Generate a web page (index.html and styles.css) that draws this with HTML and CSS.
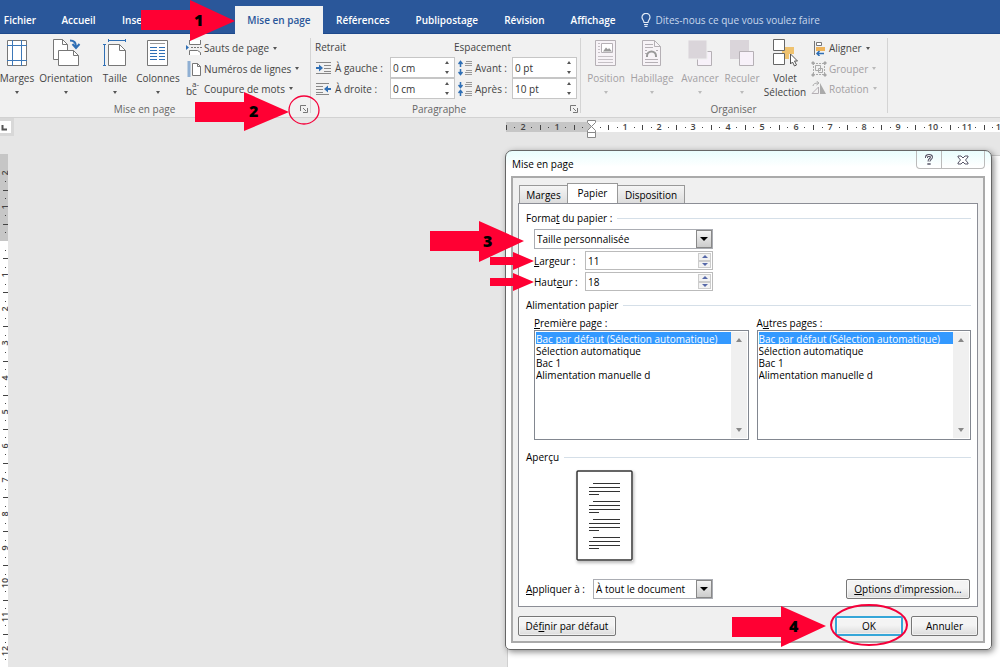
FILE: index.html
```html
<!DOCTYPE html>
<html lang="fr">
<head>
<meta charset="utf-8">
<title>Mise en page</title>
<link rel="stylesheet" href="styles.css">
</head>
<body>
<nav class="tabs">
  <a href="#" class="tab tab-file">Fichier</a>
  <a href="#" class="tab tab-home">Accueil</a>
  <a href="#" class="tab tab-insert">Insertion</a>
  <a href="#" class="tab tab-active">Mise en page</a>
  <a href="#" class="tab">Références</a>
  <a href="#" class="tab">Publipostage</a>
  <a href="#" class="tab">Révision</a>
  <a href="#" class="tab">Affichage</a>
  <a href="#" class="tell">
    <svg width="10" height="14" viewBox="0 0 10 14" fill="none" stroke="#e4ecf7" stroke-width="1.2"><path d="M3 9.500C3 7.500 1 6.500 1 4.300a4 4 0 0 1 8 0C9 6.500 7 7.500 7 9.500zM3 11.500h4M3.500 13.300h3"/></svg>
    Dites-nous ce que vous voulez faire
  </a>
</nav>

<div class="ribbon">
  <section class="group group-page">
    <div class="group-body">
      <button class="big w-marges"><svg width="24" height="28" viewBox="0 0 24 28"><path d="M2.500 1.500h19v25h-19z" fill="#fff" stroke="#777"/><path d="M7.500 1v26M16.500 1v26M2 6.500h20M2 21.500h20" stroke="#3d78b8" fill="none"/></svg>Marges<i class="caret"></i></button>
      <button class="big w-orient"><svg width="30" height="28" viewBox="0 0 30 28"><path d="M2.500.5h9l5 5v15h-14z" fill="#fff" stroke="#777"/><path d="M11.500.5v5h5" fill="none" stroke="#777"/><path d="M7.500 11.500h15l5 5v10h-20z" fill="#fff" stroke="#777"/><path d="M22.500 11.500v5h5" fill="none" stroke="#777"/><path d="M19 1.500c4 0 6 2 6 6M21.500 5l3.500 4 3.500-4" fill="none" stroke="#2f6fb5" stroke-width="2"/></svg>Orientation<i class="caret"></i></button>
      <button class="big w-taille"><svg width="24" height="28" viewBox="0 0 24 28"><path d="M5.500 5.500h11l6 6v15h-17z" fill="#fff" stroke="#777"/><path d="M16.500 5.500v6h6" fill="none" stroke="#777"/><path d="M5 1.500h18M5.500 0v3M22.500 0v3M1.500 5v21M0 5.500h3M0 26.500h3" stroke="#2f6fb5" fill="none"/></svg>Taille<i class="caret"></i></button>
      <button class="big w-col"><svg width="24" height="28" viewBox="0 0 24 28"><path d="M1.500 1.500h20v25h-20z" fill="#fff" stroke="#777"/><path d="M4 4.500h15" stroke="#999"/><path d="M4 8.500h7M13 8.500h6M4 11.500h7M13 11.500h6M4 14.500h7M13 14.500h6M4 17.500h7M13 17.500h6M4 20.500h7M13 20.500h6" stroke="#2f6fb5"/></svg>Colonnes<i class="caret"></i></button>
      <div class="rows">
        <button class="row"><svg width="16" height="16" viewBox="0 0 16 16" fill="none"><path d="M3.500 0v4.500h11V0M3.500 15v-4.500h8l3 2V15" fill="#fff" stroke="#777"/><path d="M5 7.500h11" stroke="#777" stroke-dasharray="2 1"/><path d="M0 5l3 2.500L0 10z" fill="#2f6fb5"/></svg>Sauts de page<i class="caret"></i></button>
        <button class="row"><svg width="16" height="16" viewBox="0 0 16 16" fill="none"><path d="M6.500 2.500h5l3 3v9h-8z" fill="#fff" stroke="#777"/><path d="M11.500 2.500v3h3" stroke="#777"/><path d="M3 .5v15" stroke="#2f6fb5" stroke-width="3" stroke-dasharray="1 1"/></svg>Numéros de lignes<i class="caret"></i></button>
        <button class="row"><svg width="16" height="20" viewBox="0 0 16 20"><text x="0" y="16" class="glyph">bc</text><text x="6" y="8" class="glyph glyph-sm">a-</text></svg>Coupure de mots<i class="caret"></i></button>
      </div>
    </div>
    <div class="group-foot"><span>Mise en page</span><button class="launch" aria-label="Mise en page"><svg width="8" height="8" viewBox="0 0 8 8" fill="none" stroke="#777"><path d="M.5 6V.5H6M3 3l3 3M7.500 3v4.500H3"/></svg></button></div>
  </section>

  <section class="group group-para">
    <div class="group-body para">
      <div class="para-col">
        <span class="para-head">Retrait</span>
        <div class="field"><svg width="16" height="14" viewBox="0 0 16 14"><path d="M1 1.500h15M9 4.500h7M9 7.500h7M1 12.500h15M9 10.500h7" stroke="#888"/><path d="M1 6h3V3.500L8 7l-4 3.500V8H1z" fill="#2f6fb5"/></svg><label for="g">À gauche :</label><span class="spin"><input id="g" value="0 cm"><span class="ud"><button aria-label="Plus"></button><button aria-label="Moins"></button></span></span></div>
        <div class="field"><svg width="16" height="14" viewBox="0 0 16 14"><path d="M1 1.500h13M1 4.500h7M1 7.500h7M1 12.500h13M1 10.500h7" stroke="#888"/><path d="M16 6h-3V3.500L9 7l4 3.500V8h3z" fill="#2f6fb5"/></svg><label for="d">À droite :</label><span class="spin"><input id="d" value="0 cm"><span class="ud"><button aria-label="Plus"></button><button aria-label="Moins"></button></span></span></div>
      </div>
      <div class="para-col">
        <span class="para-head">Espacement</span>
        <div class="field field-gap"><svg width="14" height="16" viewBox="0 0 14 16"><path d="M2.500 7V2M.5 4l2-2.500 2 2.500M2.500 9v5M.5 12l2 2.500 2-2.500" fill="none" stroke="#2f6fb5" stroke-width="1.500"/><path d="M8 1.500h6M7 3.500h7M7 5.500h7M8 10.500h6M7 12.500h7M7 14.500h7" stroke="#999"/></svg><label for="av">Avant :</label><span class="spin"><input id="av" value="0 pt"><span class="ud"><button aria-label="Plus"></button><button aria-label="Moins"></button></span></span></div>
        <div class="field field-gap"><svg width="14" height="16" viewBox="0 0 14 16"><path d="M2.500 1v5M.5 4l2 2.500 2-2.500M2.500 15v-5M.5 12l2-2.500 2 2.500" fill="none" stroke="#2f6fb5" stroke-width="1.500"/><path d="M8 1.500h6M7 3.500h7M7 5.500h7M8 10.500h6M7 12.500h7M7 14.500h7" stroke="#999"/></svg><label for="ap">Après :</label><span class="spin"><input id="ap" value="10 pt"><span class="ud"><button aria-label="Plus"></button><button aria-label="Moins"></button></span></span></div>
      </div>
    </div>
    <div class="group-foot"><span>Paragraphe</span><button class="launch" aria-label="Paragraphe"><svg width="8" height="8" viewBox="0 0 8 8" fill="none" stroke="#777"><path d="M.5 6V.5H6M3 3l3 3M7.500 3v4.500H3"/></svg></button></div>
  </section>

  <section class="group group-org">
    <div class="group-body">
      <button class="big off w-pos"><svg width="22" height="28" viewBox="0 0 22 28"><path d="M.5 1.500h20v25H.5z" fill="#f7f3f7" stroke="#b5b0b5"/><path d="M3 4.500h2M3 7.500h2M3 10.500h2M3 13.500h2M3 17.500h15M3 20.500h15M3 23.500h15" stroke="#c5c0c5"/><path d="M6.500 4.500h11v9h-11z" fill="#fff" stroke="#b5b0b5"/><path d="M8 12.500l3-4 2 2 1-1.500 3 3.500z" fill="#999"/></svg>Position<i class="caret"></i></button>
      <button class="big off w-hab"><svg width="22" height="28" viewBox="0 0 22 28"><path d="M1.500 1.500h12l6 6v19h-18z" fill="#f7f3f7" stroke="#b5b0b5"/><path d="M13.500 1.500v6h6M4 5.500h8M4 8.500h8M4 11.500h2M15 11.500h2M4 14.500h2M4 20.500h13M4 23.500h13" fill="none" stroke="#b5b0b5"/><path d="M6 18v-1a4.500 4.500 0 0 1 9 0v1" fill="none" stroke="#999" stroke-width="2"/></svg>Habillage<i class="caret"></i></button>
      <button class="big off w-av"><svg width="26" height="28" viewBox="0 0 26 28"><path d="M10.500 12.500h14v14h-14z" fill="#f7f1f9" stroke="#b5b0b5"/><path d="M1 1h19v19H1z" fill="#dad5da" stroke="#f0f0f0"/></svg>Avancer<i class="caret"></i></button>
      <button class="big off w-rec"><svg width="26" height="28" viewBox="0 0 26 28"><path d="M1 1h19v19H1z" fill="#dad5da"/><path d="M10.500 12.500h14v14h-14z" fill="#f7f1f9" stroke="#b5b0b5"/></svg>Reculer<i class="caret"></i></button>
      <button class="big w-volet"><svg width="26" height="28" viewBox="0 0 26 28"><path d="M10 8h12v7h-5v5h-5v-5h-2z" fill="#efc26f"/><path d="M1.500.5h11v11h-11zM1.500 14.500h11v11h-11z" fill="#fff" stroke="#666"/><path d="M18.500 15v10l2-2 2 4 2-1-2-4h3z" fill="#fff" stroke="#555"/></svg>Volet<br>Sélection</button>
      <div class="rows">
        <button class="row"><svg width="16" height="16" viewBox="0 0 16 16"><path d="M3.500 1v14" stroke="#777"/><path d="M5.500 2.500h5v3h-5z" fill="#fff" stroke="#777"/><path d="M5 7h9v4H5z" fill="#efb45a"/><path d="M6 13.500h7M8.500 11L6 13.500 8.500 16" fill="none" stroke="#2f6fb5" stroke-width="1.500"/></svg>Aligner<i class="caret"></i></button>
        <button class="row off"><svg width="16" height="16" viewBox="0 0 16 16" fill="none" stroke="#aaa"><path d="M2 2.500h12M2 13.500h12M2.500 2v12M13.500 2v12" stroke-dasharray="2 1"/><path d="M4.500 4.500h5v5h-5zM7.500 7.500h4v4h-4z"/><path d="M1 1h2v2H1zM13 1h2v2h-2zM1 13h2v2H1zM13 13h2v2h-2z" fill="#999"/></svg>Grouper<i class="caret"></i></button>
        <button class="row off"><svg width="16" height="16" viewBox="0 0 16 16"><path d="M9 2l6 11H9z" fill="#aaa"/><path d="M7.500 6v6.500H1z" fill="none" stroke="#b5b0b5"/><path d="M2 5c0-2 2-3 5-3M5.500 0L8 2 5.500 4" fill="none" stroke="#aaa"/></svg>Rotation<i class="caret"></i></button>
      </div>
    </div>
    <div class="group-foot"><span>Organiser</span></div>
  </section>
</div>

<main class="work">
  <div class="ruler-row">
    <span class="tabstop"><svg width="10" height="12" viewBox="0 0 10 12"><path d="M2.500 4v4.500H7" fill="none" stroke="#555" stroke-width="2"/></svg></span>
    <svg class="ruler-h" height="20"><rect x="0" y="4" width="86" height="10" fill="#c6c6c6"/><rect x="86" y="4" width="100%" height="10" fill="#fff"/><g id="ticks-h"></g><path d="M81.500 2.500h8v2l-4 4 4 4v2h-8v-2l4-4-4-4zM81.500 14.500h8v5h-8z" fill="#fff" stroke="#888"/></svg>
  </div>
  <div class="canvas">
    <svg class="ruler-v" width="8"><rect width="8" height="87" fill="#c6c6c6"/><rect y="87" width="8" height="100%" fill="#fff"/><g id="ticks-v"></g></svg>
    <div class="sheet"></div>
  </div>
</main>

<form class="dialog">
  <header class="title"><span>Mise en page</span>
    <span class="winbtns"><button type="button" aria-label="Aide"><svg width="10" height="12" viewBox="0 0 10 12" fill="none"><path d="M2.500 4V3c0-2 5-2 5 0S5 5 5 7.500M5 9v2" stroke="#556" stroke-width="3"/><path d="M2.500 4V3c0-2 5-2 5 0S5 5 5 7.500M5 9.500v1" stroke="#fff"/></svg></button><button type="button" class="close" aria-label="Fermer"><svg width="12" height="10" viewBox="0 0 12 10"><path d="M1 1h3l2 2 2-2h3v1L8.500 5 11 8v1H8L6 7 4 9H1V8l2.500-3L1 2z" fill="#fff" stroke="#556"/></svg></button></span>
  </header>
  <div class="frame">
    <div class="dtabs"><button type="button" class="dtab d1">Marges</button><button type="button" class="dtab d2">Papier</button><button type="button" class="dtab d3">Disposition</button></div>
    <div class="panel">
      <div class="legend"><span>Forma<u>t</u> du papier :</span></div>
      <div class="paper">
        <span class="combo combo-size"><select aria-label="Format du papier"><option>Taille personnalisée</option></select><i class="drop"></i></span>
        <label for="lw"><u>L</u>argeur :</label><span class="dspin"><input id="lw" value="11"><span class="dud"><button type="button" aria-label="Plus"></button><button type="button" aria-label="Moins"></button></span></span>
        <label for="lh">Haut<u>e</u>ur :</label><span class="dspin"><input id="lh" value="18"><span class="dud"><button type="button" aria-label="Plus"></button><button type="button" aria-label="Moins"></button></span></span>
      </div>
      <div class="legend"><span>Alimentation papier</span></div>
      <div class="lists">
        <div class="list"><label for="p1"><u>P</u>remière page :</label><div class="box"><select id="p1" size="4"><option selected>Bac par défaut (Sélection automatique)</option><option>Sélection automatique</option><option>Bac 1</option><option>Alimentation manuelle d</option></select><span class="rail"><i></i><i></i></span></div></div>
        <div class="list"><label for="p2">A<u>u</u>tres pages :</label><div class="box"><select id="p2" size="4"><option selected>Bac par défaut (Sélection automatique)</option><option>Sélection automatique</option><option>Bac 1</option><option>Alimentation manuelle d</option></select><span class="rail"><i></i><i></i></span></div></div>
      </div>
      <div class="legend"><span>Aperçu</span></div>
      <svg class="preview" width="57" height="91" viewBox="0 0 57 91"><rect x="1" y="1" width="55" height="89" rx="1" fill="#fff" stroke="#333" stroke-width="1.500"/><path d="M17 13.500h27M13 17.500h31M13 21.500h31M13 24.500h10M17 31.500h27M13 35.500h31M13 39.500h31M13 42.500h10M17 49.500h27M13 53.500h31M13 57.500h31M13 60.500h10M17 67.500h27M13 71.500h31M13 75.500h31M13 78.500h10" stroke="#333" stroke-width="1.200"/></svg>
      <div class="apply"><label for="apl"><u>A</u>ppliquer à :</label><span class="combo combo-apply"><select id="apl"><option>À tout le document</option></select><i class="drop"></i></span><button type="button" class="btn btn-opt"><u>O</u>ptions d'impression...</button></div>
    </div>
    <div class="actions"><button type="button" class="btn btn-def">Dé<u>f</u>inir par défaut</button><button type="button" class="btn btn-ok">OK</button><button type="button" class="btn btn-cancel">Annuler</button></div>
  </div>
</form>

<svg class="mark m1" width="94" height="42" viewBox="0 0 94 42"><path d="M0 10h49V0l45 21-45 20V30H0z"/><text x="53" y="26">1</text></svg>
<svg class="mark m2" width="94" height="42" viewBox="0 0 94 42"><path d="M0 10h49V0l45 20-45 19V30H0z"/><text x="54" y="25">2</text></svg>
<svg class="mark m3" width="94" height="42" viewBox="0 0 94 42"><path d="M0 10h49V0l45 20-45 21V30H0z"/><text x="53" y="26">3</text></svg>
<svg class="mark m4" width="94" height="42" viewBox="0 0 94 42"><path d="M0 11h49V0l45 20-45 21V31H0z"/><text x="57" y="26">4</text></svg>
<svg class="mark s1" width="44" height="18" viewBox="0 0 44 18"><path d="M0 5h23V0l21 9-21 9v-5H0z"/></svg>
<svg class="mark s2" width="44" height="18" viewBox="0 0 44 18"><path d="M0 5h23V0l21 9-21 9v-5H0z"/></svg>
<svg class="mark ring r1" width="32" height="30" viewBox="0 0 32 30"><ellipse cx="16" cy="15" rx="15" ry="14" stroke-width="1.300"/></svg>
<svg class="mark ring r2" width="80" height="44" viewBox="0 0 80 44"><ellipse cx="40" cy="22" rx="38" ry="20" stroke-width="2"/></svg>
<script src="rulers.js"></script>
</body>
</html>
```
FILE: styles.css
```css
* { box-sizing: border-box; }
body { margin: 0; position: relative; min-height: 100vh; display: flex; flex-direction: column; overflow: hidden; background: #e6e6e6; color: #444; font: 10px/14px "Open Sans", "Noto Sans", sans-serif; }
button, input, select { font: inherit; color: inherit; margin: 0; padding: 0; border: 0; background: none; border-radius: 0; outline: 0; }
i { font-style: normal; }
svg { flex: none; }
u { text-underline-offset: 1px; }

.tabs { display: flex; height: 34px; padding-top: 6px; background: #2a579a; border-bottom: 1px solid #1e4a8c; }
.tab { display: flex; align-items: center; justify-content: center; height: 28px; padding: 0 13px; color: #fff; font-weight: 600; text-decoration: none; white-space: nowrap; }
.tab-file { width: 48px; padding: 0; padding-right: 8px; }
.tab-home { width: 61px; padding: 0; }
.tab-insert { width: 126px; justify-content: flex-start; }
.tab-active { width: 88px; padding: 0; background: #f1f1f1; color: #2a579a; }
.tell { display: flex; align-items: center; gap: 5px; height: 28px; padding-left: 12px; color: #c9d7ec; text-decoration: none; white-space: nowrap; }

.ribbon { display: flex; height: 84px; background: #f1f1f1; border-bottom: 1px solid #d2d2d2; }
.group { display: flex; flex-direction: column; padding: 4px 0 0; position: relative; }
.group::after { content: ""; position: absolute; right: 0; top: 4px; bottom: 4px; border-right: 1px solid #d4d4d4; }
.group-page { width: 311px; }
.group-para { width: 270px; }
.group-org { width: 307px; padding-left: 4px; }
.group-body { display: flex; height: 64px; }
.group-foot { display: flex; align-items: center; height: 14px; color: #666; }
.group-foot span { flex: 1; text-align: center; }
.group-org .group-foot { padding-right: 6px; }
.group-page .group-foot span { padding-right: 8px; }
.launch { width: 14px; height: 12px; display: grid; place-items: center; }
.big { display: flex; flex-direction: column; align-items: center; flex: none; white-space: nowrap; line-height: 14px; }
.big svg { margin: 1px 0 4px; }
.big .caret { margin-top: 6px; }
.caret { border: 2px solid transparent; border-top: 3px solid #555; border-bottom: 0; }
.off { color: #a3a0a3; }
.off .caret { border-top-color: #bbb; }
.w-marges { width: 34px; }
.w-orient { width: 64px; }
.w-taille { width: 34px; }
.w-col { width: 52px; }
.w-pos { width: 42px; }
.w-hab { width: 50px; }
.w-av { width: 46px; }
.w-rec { width: 38px; }
.w-volet { width: 48px; color: #444; }
.rows { display: flex; flex-direction: column; justify-content: flex-end; padding-left: 2px; height: 61px; }
.row { display: flex; align-items: center; gap: 2px; height: 21px; white-space: nowrap; }
.row .caret { margin-left: 2px; }
.glyph { font-size: 10px; fill: #444; }
.glyph-sm { font-size: 8px; }

.para { padding-left: 4px; gap: 3px; }
.para-head { display: block; height: 19px; line-height: 19px; }
.field { display: grid; grid-template-columns: 16px 1fr 65px; gap: 4px; align-items: center; width: 140px; height: 21px; white-space: nowrap; }
.para-col + .para-col .para-head { margin-left: -4px; }
.field-gap { grid-template-columns: 14px 1fr 65px; gap: 3px; width: 119px; }
.spin { display: flex; height: 21px; border: 1px solid #c6c6c6; background: #fff; }
.spin input { width: 44px; flex: 1; padding-left: 2px; color: #333; }
.ud { width: 14px; display: flex; flex-direction: column; justify-content: space-between; align-items: center; padding: 3px 0; }
.ud button { border: 2px solid transparent; border-bottom: 3px solid #555; border-top: 0; }
.ud button + button { border-top: 3px solid #555; border-bottom: 0; }

.work { flex: 1; display: flex; flex-direction: column; }
.ruler-row { display: flex; height: 36px; }
.tabstop { width: 14px; height: 18px; border: 3px solid #d8d8d8; border-left: 0; background: #fff; }
.ruler-h { flex: 1; margin-left: 492px; min-width: 0; }
.ruler-v, .ruler-h { display: block; font-size: 9px; font-weight: 600; fill: #444; }
.canvas { flex: 1; display: flex; }
.ruler-v { align-self: stretch; height: auto; }
.sheet { flex: 1; margin: 1px 0 0 499px; background: #fff; border-left: 1px solid #d0d0d0; border-top: 1px solid #ccc; }

.dialog { position: absolute; left: 505px; top: 150px; width: 487px; border: 1px solid #666; border-radius: 7px 7px 5px 5px; background: linear-gradient(#e9fdfd, #fff 16px); box-shadow: 2px 2px 6px #0007; padding: 0 6px 6px 5px; color: #000; font-weight: 500; }
.title { display: flex; justify-content: space-between; height: 25px; line-height: 26px; padding-left: 1px; }
.winbtns { display: flex; height: 18px; border: 1px solid #bbb; border-top: 0; border-radius: 0 0 4px 4px; }
.winbtns button { width: 25px; display: grid; place-items: center; border-right: 1px solid #bbb; }
.winbtns .close { width: 42px; border-right: 0; }
.frame { border: 2px solid #aaa; background: #f0f0f0; padding: 5px; }
.dtabs { display: flex; align-items: flex-end; height: 20px; padding-left: 1px; }
.dtab { height: 18px; border: 1px solid #999; border-bottom: 0; background: linear-gradient(#f5f5f5, #ddd); }
.d1 { width: 48px; border-right: 0; }
.d2 { width: 51px; height: 20px; background: #fff; padding-bottom: 2px; }
.d3 { width: 67px; border-left: 0; }
.panel { border: 1px solid #8c8e96; background: #fff; padding: 7px 6px 7px 7px; }
.legend { display: flex; align-items: center; gap: 5px; height: 14px; white-space: nowrap; }
.legend::after { content: ""; flex: 1; border-top: 1px solid #d5dfe8; }
.paper { display: grid; grid-template-columns: 51px 128px; row-gap: 2px; align-items: center; padding: 4px 0 7px 8px; }
.combo { display: flex; height: 20px; border: 1px solid #abadb3; background: #fff; }
.combo-size { grid-column: 1 / 3; }
.combo select { flex: 1; min-width: 0; appearance: none; padding-left: 2px; color: #000; }
.drop { width: 16px; border: 1px solid #888; background: linear-gradient(#f3f3f3, #ccc); display: grid; place-items: center; }
.drop::after { content: ""; border: 4px solid transparent; border-top: 4px solid #000; border-bottom: 0; }
.dspin { display: flex; height: 19px; border: 1px solid #bbb; padding: 1px; }
.dspin input { flex: 1; min-width: 0; padding-left: 1px; }
.dud { width: 13px; display: grid; }
.dud button { border: 1px solid #ccc; background: #f2f2f2; display: grid; place-items: center; }
.dud button::after { content: ""; border: 3px solid transparent; border-bottom: 3px solid #5668a8; border-top: 0; }
.dud button + button::after { border-top: 3px solid #5668a8; border-bottom: 0; }
.lists { display: grid; grid-template-columns: 1fr 1fr; gap: 8px; padding: 4px 0 10px 8px; }
.list label { display: block; height: 14px; }
.box { display: flex; height: 110px; border: 1px solid #828790; padding: 1px; background: #fff; }
.box select { flex: 1; min-width: 0; overflow: hidden; appearance: none; color: #000; }
.box option { height: 12px; min-height: 12px; line-height: 12px; padding: 0; white-space: nowrap; }
.box option:checked { background: linear-gradient(#3399ff, #3399ff); -webkit-text-fill-color: #fff; }
.rail { width: 16px; background: #f0f0f0; display: flex; flex-direction: column; justify-content: space-between; align-items: center; padding: 6px 0; }
.rail i { border: 3px solid transparent; border-bottom: 4px solid #888; border-top: 0; }
.rail i + i { border-top: 4px solid #888; border-bottom: 0; }
.preview { display: block; margin: 6px 0 0 50px; box-shadow: 1px 2px 3px #0004; }
.apply { display: flex; align-items: center; margin-top: 18px; }
.apply label { width: 67px; }
.combo-apply { width: 120px; }
.btn { height: 20px; border: 1px solid #777; border-radius: 2px; background: linear-gradient(#f4f4f4 45%, #dcdcdc); box-shadow: inset 0 0 0 1px #fff8; white-space: nowrap; }
.btn-opt { width: 124px; margin: 0 1px 0 auto; }
.actions { display: flex; margin-top: 9px; }
.btn-def { width: 98px; margin-right: auto; }
.btn-ok { width: 68px; margin-right: 8px; border: 2px solid #35a6d8; }
.btn-cancel { width: 67px; }

.mark { position: absolute; fill: #ff0033; pointer-events: none; }
.mark text { fill: #000; font-size: 16px; font-weight: 800; }
.ring { fill: none; stroke: #f5003a; }
.m1 { left: 141px; top: 0; }
.m2 { left: 195px; top: 92px; }
.m3 { left: 430px; top: 221px; }
.m4 { left: 732px; top: 606px; }
.s1 { left: 490px; top: 252px; }
.s2 { left: 490px; top: 273px; }
.r1 { left: 288px; top: 95px; }
.r2 { left: 829px; top: 603px; }
```
FILE: rulers.js
```js
const NS = "http://www.w3.org/2000/svg";
const CM = 34.15;

function add(parent, name, attrs, text) {
  const el = document.createElementNS(NS, name);
  for (const key in attrs) el.setAttribute(key, attrs[key]);
  if (text) el.textContent = text;
  parent.append(el);
}

// Quarter marks are dots, half marks are bars, whole marks are numbers.
function fill(group, origin, from, vertical) {
  const box = group.ownerSVGElement.getBoundingClientRect();
  const limit = vertical ? box.height : box.width;
  for (let q = from; ; q++) {
    const at = Math.round(origin + q * CM / 4);
    if (at > limit + 2) break;
    if (q === 0) continue;
    if (q % 4 === 0) {
      const attrs = vertical
        ? { transform: `translate(8 ${at}) rotate(-90)`, "text-anchor": "middle" }
        : { x: at, y: 12, "text-anchor": "middle" };
      add(group, "text", attrs, String(Math.abs(q / 4)));
    } else {
      const size = q % 2 === 0 ? 5 : 1;
      add(group, "rect", vertical
        ? { x: 5 - (size >> 1), y: at, width: size, height: 1 }
        : { x: at, y: 9 - (size >> 1), width: 1, height: size });
    }
  }
}

fill(document.getElementById("ticks-h"), 85, -10, false);
fill(document.getElementById("ticks-v"), 87, -8, true);
```
